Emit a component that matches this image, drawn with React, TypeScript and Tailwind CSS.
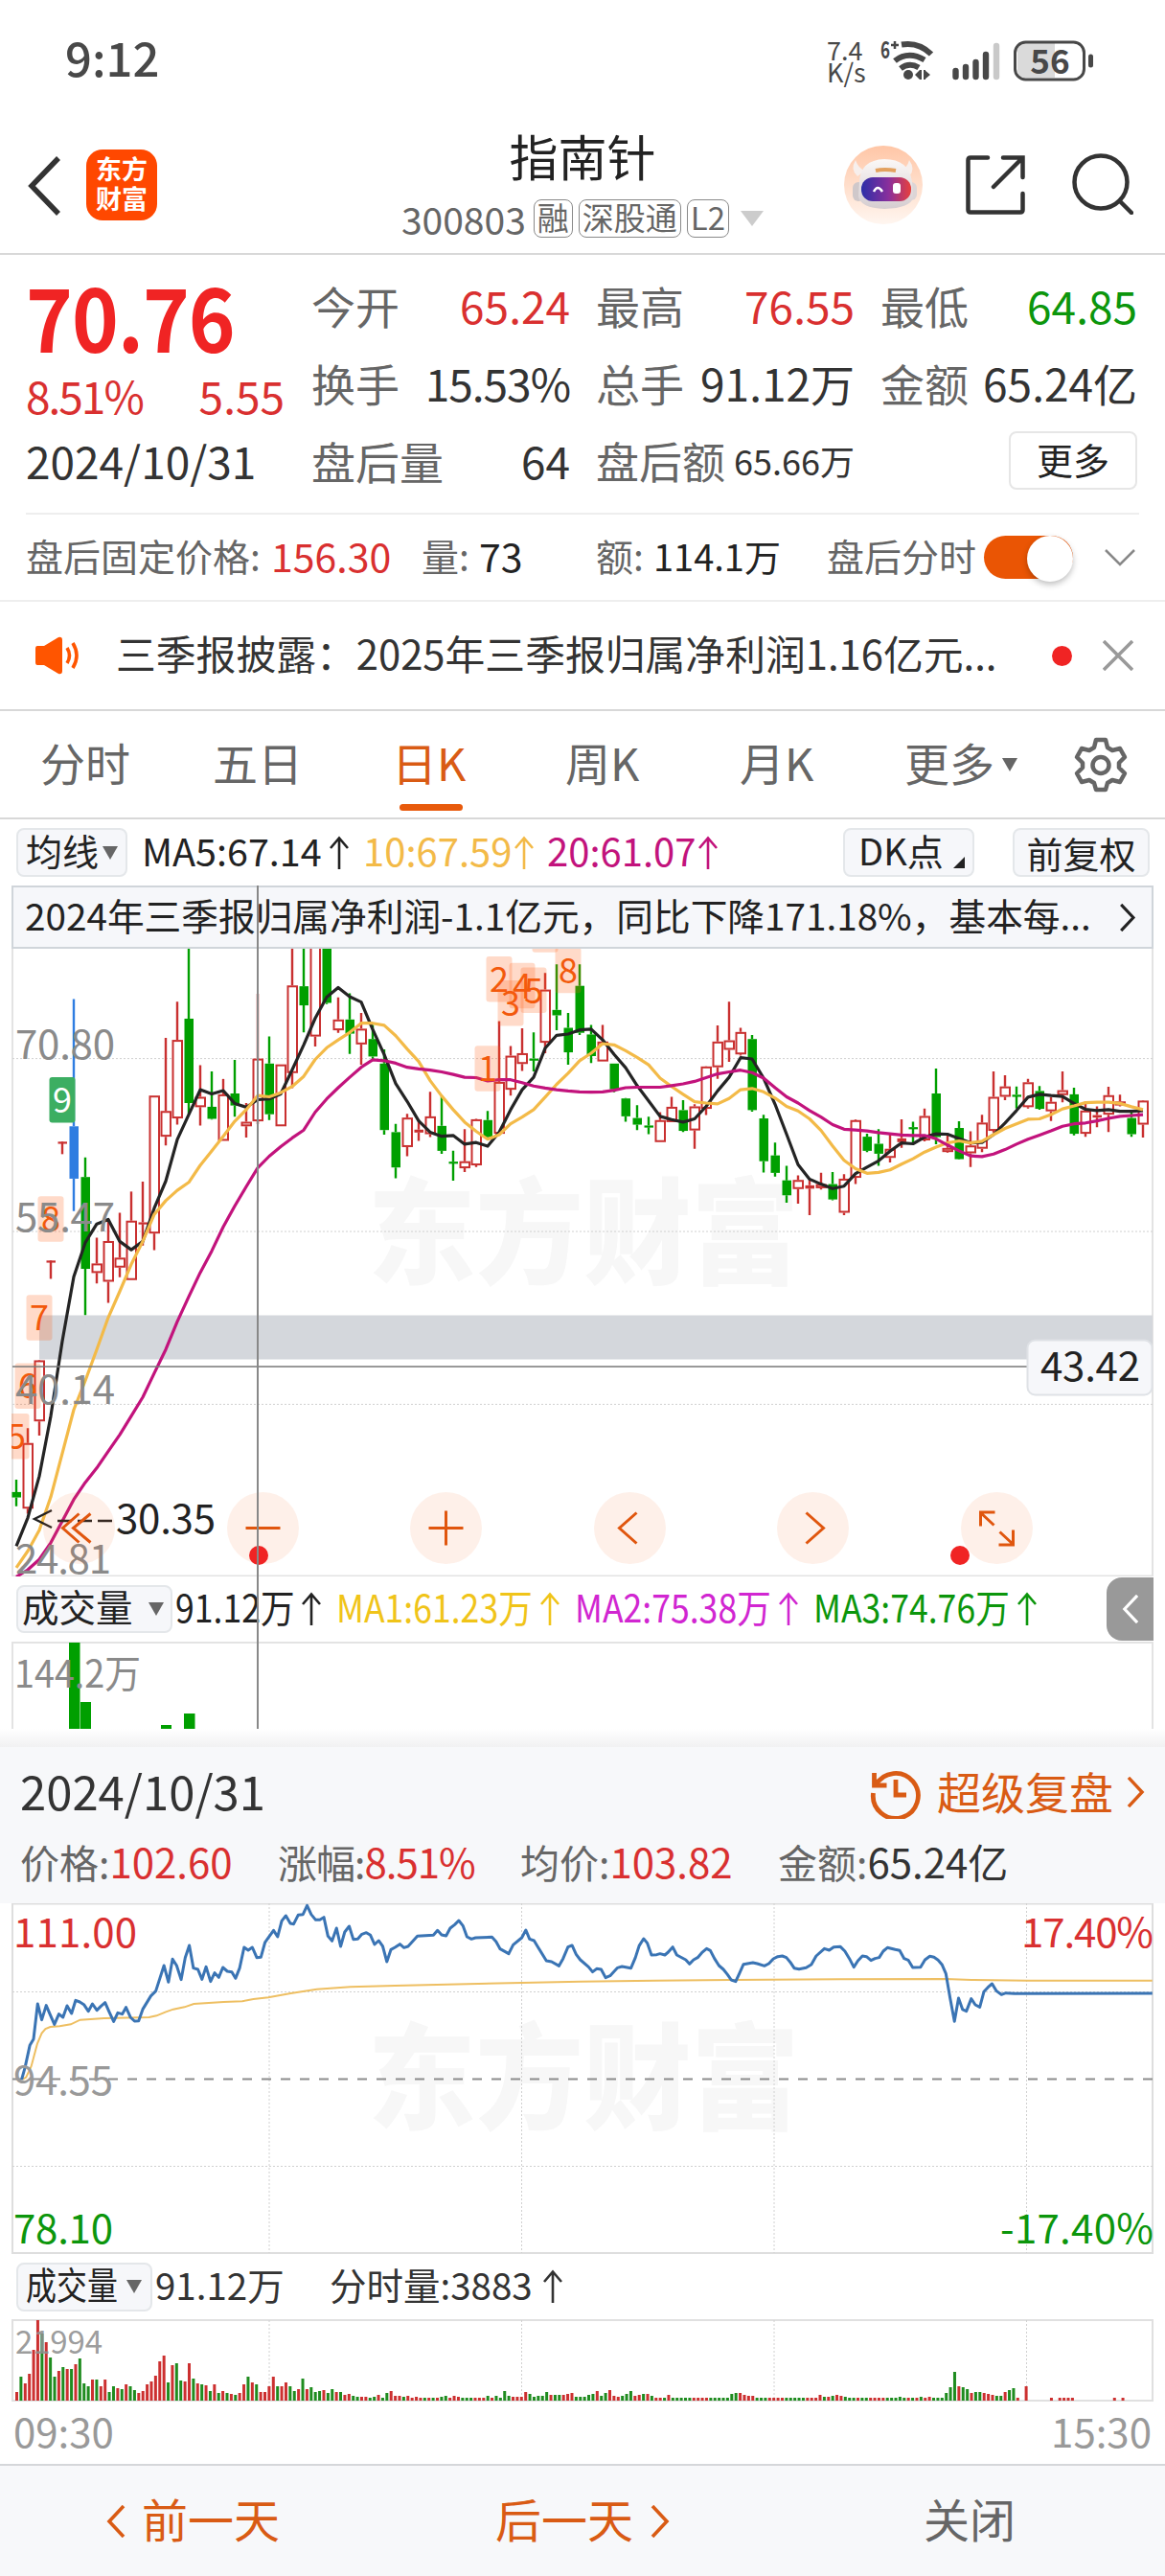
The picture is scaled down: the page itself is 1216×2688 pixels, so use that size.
import { Fragment, type ReactNode } from "react";

type Candle = [kind: "r" | "g" | "b", high: number, top: number, bottom: number, low: number];

// Chart units: one unit is UNIT px, 0 is 9px above the top edge of the plot.
const UNIT = 0.43367;
const STEP = 12;

const CANDLES: Candle[] = [
  ["g", 1298, 1328, 1341, 1362], ["r", 1174, 1210, 1368, 1380], ["r", 1010, 1011, 1158, 1192], ["r", 771, 771, 771, 815],
  ["r", 485, 485, 485, 515], ["b", 142, 448, 574, 652], ["g", 523, 570, 791, 902], ["r", 716, 778, 801, 826],
  ["r", 672, 724, 822, 873], ["r", 656, 764, 788, 811], ["r", 605, 675, 818, 818], ["r", 581, 679, 683, 735],
  ["r", 374, 374, 706, 746], ["r", 235, 411, 473, 494], ["r", 148, 240, 429, 444], ["g", 10, 189, 392, 418],
  ["r", 301, 377, 402, 446], ["g", 316, 401, 430, 432], ["r", 334, 371, 483, 483], ["g", 288, 369, 398, 425],
  ["r", 392, 437, 448, 475], ["r", 129, 285, 436, 443], ["g", 232, 297, 419, 433], ["r", 299, 299, 448, 448],
  ["r", 10, 109, 320, 356], ["g", 10, 111, 157, 222], ["r", 0, 0, 232, 256], ["g", 0, 0, 151, 154],
  ["r", 138, 191, 217, 223], ["g", 128, 191, 225, 274], ["r", 175, 213, 251, 300], ["g", 204, 238, 280, 290],
  ["g", 263, 297, 457, 468], ["g", 442, 462, 547, 573], ["r", 418, 427, 498, 520], ["r", 432, 456, 463, 483],
  ["r", 365, 424, 467, 474], ["g", 376, 447, 507, 514], ["g", 507, 533, 536, 579], ["r", 455, 532, 549, 558],
  ["r", 430, 431, 542, 546], ["g", 411, 433, 474, 480], ["r", 195, 341, 466, 466], ["r", 255, 278, 360, 374],
  ["r", 212, 272, 298, 315], ["g", 222, 285, 288, 316], ["r", 79, 119, 247, 272], ["g", 58, 168, 181, 217],
  ["g", 175, 211, 270, 300], ["g", 58, 110, 223, 228], ["g", 204, 227, 279, 296], ["r", 204, 244, 292, 292],
  ["g", 297, 297, 359, 366], ["g", 380, 381, 424, 437], ["g", 397, 428, 444, 457], ["g", 425, 446, 450, 467],
  ["r", 414, 433, 486, 486], ["r", 377, 401, 438, 438], ["g", 385, 409, 459, 462], ["r", 395, 400, 458, 502],
  ["r", 303, 304, 406, 421], ["r", 205, 244, 306, 334], ["r", 148, 241, 264, 293], ["r", 211, 221, 275, 278],
  ["g", 228, 238, 409, 413], ["g", 420, 429, 532, 559], ["g", 487, 518, 560, 569], ["g", 543, 578, 614, 632],
  ["r", 566, 577, 599, 634], ["r", 575, 590, 598, 662], ["r", 560, 587, 597, 600], ["g", 558, 587, 624, 626],
  ["r", 563, 574, 656, 662], ["r", 431, 433, 572, 587], ["g", 466, 473, 507, 510], ["g", 455, 490, 514, 543],
  ["r", 468, 502, 524, 535], ["r", 431, 477, 486, 500], ["g", 437, 450, 454, 488], ["r", 405, 423, 482, 484],
  ["g", 309, 369, 474, 491], ["r", 470, 500, 510, 512], ["g", 436, 452, 527, 528], ["r", 460, 494, 513, 546],
  ["r", 420, 439, 502, 510], ["r", 316, 377, 459, 463], ["r", 325, 352, 377, 385], ["g", 352, 372, 375, 405],
  ["r", 334, 342, 402, 405], ["g", 351, 363, 406, 408], ["r", 378, 389, 412, 435], ["r", 316, 361, 373, 390],
  ["g", 355, 371, 466, 470], ["r", 388, 410, 466, 473], ["r", 400, 421, 427, 450], ["r", 353, 373, 420, 462],
  ["r", 372, 388, 398, 400], ["g", 415, 428, 467, 473], ["r", 385, 386, 444, 475],
];

const MA5 = [
  1458, 1390, 1290, 1145, 965, 810, 728, 683, 672, 725, 745, 725, 645, 580, 480, 420, 360, 370, 362, 393, 402, 384, 382,
  370, 312, 252, 188, 137, 114, 136, 149, 215, 275, 345, 388, 435, 462, 472, 470, 491, 487, 496, 462, 408, 360, 330, 260,
  229, 226, 216, 214, 240, 275, 307, 350, 387, 424, 432, 438, 430, 400, 363, 330, 283, 286, 332, 395, 467, 540, 575, 587,
  598, 592, 562, 546, 531, 508, 488, 490, 474, 466, 467, 477, 488, 487, 468, 440, 410, 378, 371, 374, 376, 393, 407, 410,
  408, 412, 412, 410,
];
const MA10 = [
  1510, 1470, 1420, 1340, 1235, 1130, 1060, 985, 908, 845, 780, 725, 660, 627, 602, 583, 542, 507, 472, 436, 408, 374,
  377, 367, 352, 328, 287, 259, 240, 222, 200, 200, 205, 230, 262, 292, 338, 375, 408, 438, 460, 479, 468, 442, 426, 408,
  378, 347, 320, 290, 272, 249, 252, 266, 282, 300, 332, 352, 371, 389, 392, 394, 381, 360, 357, 365, 380, 400, 411, 430,
  458, 495, 530, 550, 561, 559, 553, 539, 526, 510, 498, 488, 483, 488, 484, 468, 453, 442, 431, 430, 420, 406, 399, 391,
  390, 390, 393, 401, 408,
];
const MA20 = [
  1532, 1515, 1490, 1450, 1398, 1346, 1305, 1270, 1230, 1190, 1145, 1100, 1042, 985, 918, 858, 800, 748, 690, 640, 593,
  548, 520, 497, 476, 457, 414, 382, 355, 330, 306, 288, 290, 296, 306, 310, 313, 317, 323, 330, 331, 339, 336, 336, 343,
  351, 356, 360, 363, 365, 366, 365, 361, 355, 354, 354, 354, 350, 346, 340, 331, 322, 317, 313, 319, 332, 355, 377, 392,
  410, 426, 444, 455, 457, 459, 463, 466, 469, 470, 470, 478, 493, 507, 519, 521, 515, 504, 491, 479, 469, 459, 448, 442,
  440, 435, 429, 424, 422, 420,
];

// [candle index, top in chart units, digit]
const SIGNALS: [number, number, string][] = [
  [0, 1139, "5"], [1, 1018, "6"], [2, 854, "7"], [3, 616, "8"], [41, 254, "1"], [42, 39, "2"], [43, 97, "3"],
  [44, 55, "4"], [45, 66, "5"], [46, -80, ""], [48, 18, "8"],
];

const PRICE_LINE =
  "58,597 67,560 80,490 90,470 101,360 112,410 124,365 135,395 146,424 158,392 169,402 180,366 192,390 203,349 214,354 225,362 237,383 248,360 260,380 271,367 282,356 293,385 305,415 316,388 328,392 338,371 350,402 361,414 372,413 383,377 405,335 418,320 440,240 452,292 463,220 474,240 486,284 497,215 508,177 519,248 531,252 542,283 553,244 565,290 576,263 587,277 598,246 610,258 622,260 632,280 643,248 655,183 666,192 677,183 689,215 700,214 711,168 722,150 734,130 745,150 756,100 767,84 779,108 788,110 800,82 813,80 824,52 835,80 847,97 858,97 869,89 880,148 891,163 903,123 914,180 925,135 937,117 948,158 960,157 971,142 983,137 994,145 1005,174 1016,162 1027,180 1038,228 1049,190 1060,183 1073,173 1084,184 1095,180 1120,148 1163,145 1174,130 1185,144 1197,147 1208,123 1220,112 1231,99 1242,115 1253,150 1265,157 1276,153 1320,151 1331,165 1342,188 1365,203 1377,175 1400,153 1411,129 1421,157 1433,162 1445,185 1466,225 1480,228 1500,241 1511,218 1524,182 1535,177 1546,205 1557,222 1579,244 1590,260 1601,250 1613,252 1625,278 1637,272 1657,247 1669,243 1693,248 1705,215 1715,178 1727,156 1737,170 1748,207 1762,206 1771,203 1784,207 1793,198 1805,182 1816,207 1840,222 1850,235 1861,222 1872,215 1883,200 1896,187 1906,193 1917,218 1929,240 1941,252 1952,268 1962,285 1974,290 1985,262 1995,236 2020,231 2032,234 2051,241 2063,234 2075,219 2087,212 2099,210 2110,215 2122,232 2131,248 2144,251 2163,247 2177,237 2190,210 2212,187 2225,192 2237,182 2255,181 2267,195 2279,218 2291,245 2302,225 2314,210 2325,212 2337,224 2348,218 2359,215 2370,195 2381,184 2402,190 2414,193 2426,218 2437,223 2449,246 2470,245 2482,222 2495,211 2506,214 2517,223 2528,238 2538,265 2549,340 2561,415 2572,342 2583,378 2593,383 2606,344 2617,363 2629,370 2640,322 2651,308 2662,297 2674,320 2687,331 2699,326 2722,328 3092,327";
const AVERAGE_LINE =
  "60,597 70,590 84,555 100,485 112,452 122,438 135,432 160,430 190,424 215,410 280,405 400,402 420,397 445,385 465,377 495,370 520,360 600,354 650,352 680,345 720,340 780,327 850,314 940,307 1060,303 1200,299 1400,294 1557,290 1757,287 1957,285 2257,283 2537,282 2607,285 2757,287 3092,287";

// One bar per minute, height in px.
const MINUTE_VOLUME =
  "r9 g25 r18 r28 r53 r84 g70 r61 g45 g25 r31 g35 r33 g33 r38 g44 g18 g15 r22 g22 r15 r22 g9 g15 r13 g12 r17 g15 g11 r8 r10 r17 r20 r26 r41 r47 g19 r37 g39 g21 r20 r39 g23 r18 g17 r16 g10 r17 g8 r10 g8 r7 g6 r8 r17 g25 r19 g17 r9 r9 r15 r25 g15 r15 r19 g15 g10 r12 g23 r12 g14 g9 g10 r11 g8 g12 r9 g9 r6 r7 g5 g4 r4 r4 g3 g4 r6 g3 g8 r10 r5 r5 g4 r5 r3 r4 r3 g3 r3 g3 r3 g4 g5 r3 r5 r4 g3 g3 g3 r3 r3 r3 g5 r3 g5 g3 g10 g5 r4 r4 r4 r9 g7 g4 g5 g5 g9 r6 g6 g6 r6 r7 r8 g4 g4 g4 g6 g7 r10 g5 g8 r11 r5 r4 g5 g7 g10 r5 r6 g7 r7 g5 r3 r3 g3 r6 g3 g3 g3 g3 g3 r3 r3 r3 r3 g3 g3 g3 g3 g3 g7 g8 r8 r6 r5 r5 g3 g3 g3 r3 r3 r3 r3 g3 g3 g3 g3 g3 r3 r3 r3 r6 g4 r4 g5 r6 r5 g4 g3 g3 r3 g3 g3 r3 r3 r3 r3 g3 g3 g3 g4 g3 r3 g3 r3 g4 r3 r4 g3 g3 g3 g8 g14 g30 r15 g14 g12 r8 g9 g9 r8 r7 r6 g5 g5 r9 g11 g13 r3 r0 r15 r0 r0 r0 r0 r0 r3 r0 r3 r3 r3 r3 r0 r0 r0 r0 r0 r0 r0 r0 r0 r3 r0 r3".split(" ");

const FILL = { r: "#c93030", g: "#009f00", b: "#2f7de1" };

const cx = (i: number) => 17 + i * STEP;
const cy = (v: number) => v * UNIT - 9;
const line = (values: number[]) => values.map((v, i) => `${cx(i)},${cy(v).toFixed(1)}`).join(" ");

function UpArrow({ className = "" }: { className?: string }) {
  return (
    <svg viewBox="0 0 22 36" className={`h-9 w-[22px] shrink-0 ${className}`} fill="none" stroke="currentColor" strokeWidth="2.6">
      <path d="M11 35V3M2 13l9-10.500 9 10.500" />
    </svg>
  );
}

function Caret({ className = "" }: { className?: string }) {
  return (
    <svg viewBox="0 0 16 14" className={`h-3.5 w-4 shrink-0 fill-[#666] ${className}`}>
      <path d="M0 0h16L8 14z" />
    </svg>
  );
}

function Chevron({ left, className = "" }: { left?: boolean; className?: string }) {
  return (
    <svg viewBox="0 0 20 34" className={`shrink-0 ${className}`} fill="none" stroke="currentColor" strokeWidth="3.6">
      <path d={left ? "M18 1 3 17l15 16" : "M2 1l15 16L2 33"} />
    </svg>
  );
}

function Squeeze({ children }: { children: ReactNode }) {
  return <span className="inline-block origin-left scale-x-[0.89] whitespace-nowrap">{children}</span>;
}

function Watermark({ y }: { y: number }) {
  return (
    <text x="384" y={y} fontSize="120" fontWeight="900" fill="#f7f7f7" textLength="450" lengthAdjust="spacingAndGlyphs">
      东方财富
    </text>
  );
}

function StatusBar() {
  return (
    <div className="flex h-[125px] items-center pl-[68px] text-[#484848]">
      <span className="-mt-2 text-[49px] font-medium">9:12</span>
      <div className="ml-auto flex w-[43px] flex-col text-[27px] leading-[23px] whitespace-nowrap">
        <span>7.4</span>
        <span>K/s</span>
      </div>
      <svg viewBox="0 0 240 50" className="mr-[58px] ml-3 h-[50px] w-[240px]" fill="none" stroke="#484848">
        <text x="1" y="23" fontSize="25" fontWeight="700" fill="#484848" stroke="none" textLength="10" lengthAdjust="spacingAndGlyphs">6</text>
        <path d="M12 9h8M16 5v8" strokeWidth="2.500" />
        <path d="M23 9q18-3 31 10M16 26q14-11 31-1M22 34q9-7 19-1" strokeWidth="6" transform="translate(0 -.5)" />
        <circle cx="30" cy="40" r="5" fill="#484848" stroke="none" />
        <path d="M37 40l5-5v10zM47 35v10l6-5z" fill="#484848" stroke="none" />
        <path d="M43 35v10M47 35v10" strokeWidth="2" />
        <g strokeWidth="6.4" strokeLinecap="round">
          <path d="M79.500 36v6M90 32v10M100.500 27v15M111 19v23" />
          <path d="M122 10v32" stroke="#c9c9c9" />
        </g>
        <path d="M150 7h33v36h-33q-6 0-6-9V16q0-9 6-9" fill="#dadada" stroke="none" />
        <rect x="141.500" y="6" width="72" height="39" rx="11" strokeWidth="3" />
        <path d="M220.500 21v9" strokeWidth="5" strokeLinecap="round" />
        <text x="178" y="38.500" fontSize="35" fontWeight="700" fill="#484848" stroke="none" textAnchor="middle">56</text>
      </svg>
    </div>
  );
}

function Robot() {
  return (
    <svg viewBox="0 0 82 82" className="size-[82px]">
      <defs>
        <linearGradient id="peach" x1="0" y1="0" x2="0" y2="1">
          <stop offset="0" stopColor="#ffc6a6" />
          <stop offset="1" stopColor="#fff6f0" />
        </linearGradient>
        <linearGradient id="visor">
          <stop offset="0" stopColor="#2c2fa8" />
          <stop offset=".55" stopColor="#8a2f9c" />
          <stop offset="1" stopColor="#e8403c" />
        </linearGradient>
        <linearGradient id="shell" x1="0" y1="0" x2="0" y2="1">
          <stop offset="0" stopColor="#fbf8f7" />
          <stop offset="1" stopColor="#d5cdd0" />
        </linearGradient>
      </defs>
      <circle cx="41" cy="41" r="41" fill="url(#peach)" />
      <path d="M12 15q-6 10 2 17l8-6q-7-2-10-11M68 15q7 10 0 17l-10-6q8-2 10-11" fill="#f7efec" />
      <rect x="9" y="38" width="12" height="20" rx="6" fill="#cfc8ca" />
      <rect x="64" y="38" width="12" height="19" rx="6" fill="#ddd5d6" />
      <path d="M16 38q1-23 26-24 26 0 29 24l1 16q-2 11-30 12-25-1-27-13z" fill="url(#shell)" />
      <rect x="18" y="33" width="52" height="25" rx="12" fill="url(#visor)" />
      <path d="M33 26q9-2 21 0" stroke="#e3a15f" strokeWidth="4" fill="none" />
      <path d="M31 48q4-8 9 0" stroke="#fff" strokeWidth="2.500" fill="none" />
      <rect x="51" y="39" width="8" height="11" rx="3" fill="#fff" />
    </svg>
  );
}

function Header() {
  return (
    <header className="grid h-[141px] grid-cols-[1fr_auto_1fr] border-b-2 border-[#d8d8d8] text-[#666]">
      <div className="flex items-start pt-[31px] pl-7">
        <svg viewBox="0 0 36 64" className="mt-1.5 h-16 w-9" fill="none" stroke="#333" strokeWidth="5.500">
          <path d="M33 3 5 32l28 29" />
        </svg>
        <div className="ml-[26px] flex size-[74px] flex-col items-center justify-center rounded-[17px] bg-[#ff4800] pb-1 text-[27px] leading-[31px] font-bold text-white">
          <span>东方</span>
          <span>财富</span>
        </div>
      </div>
      <div className="flex w-[380px] flex-col items-center">
        <h1 className="text-[51px] leading-[74px] text-[#222]">指南针</h1>
        <div className="mt-[7px] flex items-center gap-[6px] text-[39px] leading-[44px]">
          <span className="mr-0.5">300803</span>
          {["融", "深股通", "L2"].map((tag) => (
            <span key={tag} className="flex h-10 items-center rounded-lg border-[1.5px] border-[#8a8a8a] px-[3px] pb-1 text-[33px]">
              {tag}
            </span>
          ))}
          <svg viewBox="0 0 24 16" className="ml-1.5 h-4 w-6 fill-[#ccc]">
            <path d="M0 0h24L12 16z" />
          </svg>
        </div>
      </div>
      <div className="flex items-start justify-end pt-[27px] pr-[33px]">
        <Robot />
        <svg viewBox="0 0 62 62" className="mt-[10px] ml-[45px] size-[62px]" fill="none" stroke="#333" strokeWidth="4.500" strokeLinecap="round">
          <path d="M23 2.500H5q-2.500 0-2.500 2.500v52q0 2.500 2.500 2.500h52q2.500 0 2.500-2.500V40M39 2.500h20.500V23M59 3 29 33" />
        </svg>
        <svg viewBox="0 0 64 64" className="mt-2 ml-[49px] size-16" fill="none" stroke="#333" strokeWidth="4.500" strokeLinecap="round">
          <circle cx="30" cy="30" r="27.500" />
          <path d="m50 50 12 12" />
        </svg>
      </div>
    </header>
  );
}

function Stat({ label, value, tone = "text-[#333]" }: { label: string; value: string; tone?: string }) {
  return (
    <div className="flex justify-between whitespace-nowrap">
      <span className="text-[#666]">{label}</span>
      <span className={tone}>{value}</span>
    </div>
  );
}

function Quote() {
  return (
    <section className="flex h-[269px] pr-7 pl-[27px] text-[46px] leading-[81px]">
      <div className="w-[270px] pt-[12px] text-[#d93030]">
        <div className="h-[99px] origin-left scale-x-[0.9] text-[92px] leading-[100px] font-bold tracking-[-1px] text-[#f02424]">70.76</div>
        <div className="flex w-[270px] justify-between leading-[70px]">
          <span className="tracking-[-2px]">8.51%</span>
          <span>5.55</span>
        </div>
        <div className="leading-[66px] text-[#333]">2024/10/31</div>
      </div>
      <div className="mt-[12px] ml-7 grid grow grid-cols-[270px_270px_268px] content-start gap-x-[27px]">
        <Stat label="今开" value="65.24" tone="text-[#d93030]" />
        <Stat label="最高" value="76.55" tone="text-[#d93030]" />
        <Stat label="最低" value="64.85" tone="text-[#0c960c]" />
        <Stat label="换手" value="15.53%" tone="text-[#333] tracking-[-1px]" />
        <Stat label="总手" value="91.12万" />
        <Stat label="金额" value="65.24亿" />
        <Stat label="盘后量" value="64" />
        <div className="flex justify-between whitespace-nowrap">
          <span className="text-[45px] text-[#666]">盘后额</span>
          <span className="text-[36px] text-[#333]">65.66万</span>
        </div>
        <button className="mt-2.5 h-[61px] w-[134px] justify-self-end rounded-lg border-2 border-[#e6e6e6] pb-1 text-[38px] leading-[53px] text-[#222]">
          更多
        </button>
      </div>
    </section>
  );
}

function AfterHours() {
  return (
    <section className="border-b-2 border-[#eee]">
      <div className="mx-[27px] flex h-[91px] items-center border-t-2 border-[#eee] pb-1 text-[39px] whitespace-nowrap text-[#666]">
        <span className="w-[256px]">盘后固定价格:</span>
        <span className="w-[157px] text-[41px] text-[#d93030]">156.30</span>
        <span className="w-[60px]">量:</span>
        <span className="w-[122px] text-[41px] text-[#222]">73</span>
        <span className="w-[60px]">额:</span>
        <span className="w-[181px] text-[38px] text-[#222]">114.1万</span>
        <span>盘后分时</span>
        <span className="mt-1 ml-2 flex h-[45px] w-[93px] shrink-0 justify-end rounded-full bg-[#ea5504]">
          <span className="size-[48px] rounded-full bg-white shadow-[0_3px_6px_rgba(0,0,0,0.25)]" />
        </span>
        <svg viewBox="0 0 32 18" className="mt-1 mr-1 ml-auto h-[18px] w-8" fill="none" stroke="#888" strokeWidth="2.500">
          <path d="m1 1 15 15L31 1" />
        </svg>
      </div>
    </section>
  );
}

function Notice() {
  return (
    <section className="flex h-[114px] items-center border-b-2 border-[#d8d8d8] pr-[33px] pl-9 text-[42px] text-[#333]">
      <svg viewBox="0 0 48 40" className="h-10 w-12" fill="none" stroke="#ff5500" strokeWidth="3.600">
        <path d="M3 10h7L25 1q4-1 4 3v32q0 4-4 3L10 30H3q-2 0-2-3V13q0-3 2-3" fill="#ff5500" stroke="none" />
        <path d="M34 12q5 8 0 16M40 7q8 13 0 26" />
      </svg>
      <span className="-mt-1.5 ml-[37px] text-[41.800px] whitespace-nowrap">三季报披露：2025年三季报归属净利润1.16亿元...</span>
      <span className="ml-auto size-[21px] rounded-full bg-[#f02424]" />
      <svg viewBox="0 0 32 32" className="ml-8 size-8" fill="none" stroke="#999" strokeWidth="3.500">
        <path d="m1 1 30 30M31 1 1 31" />
      </svg>
    </section>
  );
}

function Tabs() {
  const tabs = [
    ["分时", "w-[180px]"], ["五日", "w-[187px]"], ["日K", "w-[181px]"], ["周K", "w-[182px]"], ["月K", "w-[172px]"],
  ];
  return (
    <nav className="flex h-[113px] items-center border-b-2 border-[#d8d8d8] pl-[42px] text-[47px] text-[#666]">
      {tabs.map(([name, width]) => (
        <div key={name} className={`${width} relative ${name === "日K" ? "text-[#d95b14]" : ""}`}>
          <span className="relative -top-0.5">{name}</span>
          {name === "日K" && <span className="absolute -bottom-[13px] left-2 h-[7px] w-[66px] rounded bg-[#e85a0c]" />}
        </div>
      ))}
      <span className="-mt-1">更多</span>
      <Caret className="ml-2" />
      <svg viewBox="0 0 56 58" className="ml-[59px] h-[58px] w-14" fill="none" stroke="#666" strokeWidth="4.500" strokeLinejoin="round">
        <path d="M23 3h10l2 8 5 3 8-2 5 9-6 6v5l6 6-5 9-8-2-5 3-2 7H23l-2-7-5-3-8 2-5-9 6-6v-5l-6-6 5-9 8 2 5-3z" />
        <circle cx="28" cy="29.500" r="8.500" />
      </svg>
    </nav>
  );
}

function MaRow() {
  return (
    <div className="flex h-[69px] items-center pr-4 pl-[17px] text-[40px] whitespace-nowrap text-[#222]">
      <button className="flex h-[51px] w-[116px] items-center rounded-lg border-2 border-[#e4e7ea] bg-[#f6f7fa] pl-2 text-[38px]">
        <span className="-mt-1.5">均线</span>
        <Caret className="ml-1" />
      </button>
      <span className="-mt-1.5 ml-[15px] w-[195px] text-[39.500px]">MA5:67.14</span>
      <UpArrow />
      <span className="-mt-1.5 ml-[14px] w-[157px]  text-[#f3ba48]">10:67.59</span>
      <UpArrow className="text-[#f3ba48]" />
      <span className="-mt-1.5 ml-[13px] w-[157px] text-[#c2137c]">20:61.07</span>
      <UpArrow className="text-[#c2137c]" />
      <button className="ml-auto flex h-[51px] w-[137px] items-center rounded-lg border-2 border-[#e4e7ea] bg-[#f6f7fa] pl-3.5">
        <span className="-mt-1.5 text-[38px]">DK点</span>
        <svg viewBox="0 0 12 12" className="mt-5 ml-2.5 size-3 fill-[#222]">
          <path d="M12 0v12H0z" />
        </svg>
      </button>
      <button className="ml-10 h-[51px] w-[143px] rounded-lg border-2 border-[#e4e7ea] bg-[#f6f7fa] text-[38px] leading-[38px]">前复权</button>
    </div>
  );
}

function RoundButton({ x, d }: { x: number; d: string }) {
  return (
    <g transform={`translate(${x} 604.500)`}>
      <circle r="37.500" fill="rgba(250,110,40,0.1)" />
      <path d={d} fill="none" stroke="#e0560e" strokeWidth="3" />
    </g>
  );
}

function KChart() {
  return (
    <svg viewBox="0 0 1216 655" className="block h-[655px] w-full">
      <defs>
        <clipPath id="plot">
          <rect x="12" y="0" width="1191" height="655" />
        </clipPath>
      </defs>
      <Watermark y={341} />
      <path d="M13 0v654.500h1190V0" fill="none" stroke="#e3e3e3" strokeWidth="2" />
      <path d="M13 114.600h1190M13 295h1190M13 475.400h1190" stroke="#d0d0d0" strokeDasharray="2 2" />
      <rect x="41" y="382.500" width="1162" height="46" fill="#d4d7dc" />

      <g clipPath="url(#plot)">
        {CANDLES.map(([kind, high, top, bottom, low], i) => {
          const x = cx(i);
          const color = FILL[kind];
          const hollow = kind === "r" && bottom - top > 9;
          const h = Math.max((bottom - top) * UNIT, 2.2);
          return (
            <Fragment key={i}>
              <path d={`M${x} ${cy(high)}V${cy(top)}M${x} ${cy(bottom)}V${cy(low)}`} stroke={color} strokeWidth="2.400" />
              {hollow ? (
                <rect x={x - 4.5} y={cy(top) + 1} width="9.500" height={h - 2} fill="#fff" stroke={color} strokeWidth="2" />
              ) : (
                <rect x={x - 4.5} y={cy(top)} width="9.500" height={h} fill={color} />
              )}
            </Fragment>
          );
        })}
        <g fill="none" strokeWidth="3.200" strokeLinejoin="round">
          <polyline points={line(MA5)} stroke="#242424" />
          <polyline points={line(MA10)} stroke="#f3ba48" />
          <polyline points={line(MA20)} stroke="#c2137c" />
        </g>
        {SIGNALS.map(([i, top, digit]) => (
          <g key={i} transform={`translate(${cx(i)} ${cy(top)})`}>
            <rect x="-13.500" y="0" width="27" height="47.500" rx="3" fill="rgba(255,95,20,0.23)" />
            {digit && <text y="37" fontSize="36" fill="#f2590c" textAnchor="middle">{digit}</text>}
          </g>
        ))}
        <g transform={`translate(${cx(4)} ${cy(330)})`}>
          <rect x="-13.500" width="27" height="47.500" rx="3" fill="#3cae62" />
          <text y="37" fontSize="36" fill="#fff" textAnchor="middle">9</text>
        </g>
      </g>

      <g fontSize="42" fill="#8a8a8a">
        <text x="16" y="114.500" textLength="104">70.80</text>
        <text x="16" y="295" textLength="104">55.47</text>
        <text x="16" y="475" textLength="104">40.14</text>
        <text x="16" y="652" textLength="100">24.81</text>
      </g>
      <path d="M54 586 36 595l18 9M60 597h15M81 597h15M102 597h15" fill="none" stroke="#222" strokeWidth="2.400" />
      <text x="121" y="610" fontSize="42" fill="#222" textLength="104">30.35</text>
      <path d="M13 436h1190" stroke="#777" strokeWidth="1.500" />

      <RoundButton x={82.5} d="M12-15-6 0l18 15M0-15-17 0 0 15" />
      <RoundButton x={274.5} d="M-18 0h36" />
      <RoundButton x={465.5} d="M-18 0h36M0-18v36" />
      <RoundButton x={657.5} d="M7-16-11 0 7 16" />
      <RoundButton x={848.5} d="M-7-16 11 0-7 16" />
      <RoundButton x={1040.5} d="M-3-3-17-16M-17-2v-14.500h15M3 4 17 17M17 2v15.500H2" />
      <circle cx="270" cy="633" r="10" fill="#f02424" />
      <circle cx="1002" cy="633" r="10" fill="#f02424" />
      <rect x="1072.500" y="408.500" width="130" height="57" rx="8" fill="#f6f7fa" stroke="#dfe2e6" strokeWidth="2" />
      <text x="1086" y="450.500" fontSize="42" fill="#222" textLength="104">43.42</text>
    </svg>
  );
}

function VolumeRow() {
  return (
    <div className="flex h-[68px] items-center pl-[17px] text-[40px] whitespace-nowrap text-[#222]">
      <button className="flex h-[50px] w-[163px] items-center rounded-lg border-2 border-[#e4e7ea] bg-[#f6f7fa] pl-1 text-[38.500px]">
        <span className="-mt-1.5">成交量</span>
        <Caret className="ml-4" />
      </button>
      <span className="-mt-1.5 ml-[3px] w-[131px]"><Squeeze>91.12万</Squeeze></span>
      <UpArrow />
      <span className="-mt-1.5 ml-[15px] w-[212px] text-[#f0c419]"><Squeeze>MA1:61.23万</Squeeze></span>
      <UpArrow className="text-[#f0c419]" />
      <span className="-mt-1.5 ml-[15px] w-[212px] text-[#d126d1]"><Squeeze>MA2:75.38万</Squeeze></span>
      <UpArrow className="text-[#d126d1]" />
      <span className="-mt-1.5 ml-[15px] w-[212px] text-[#0c960c]"><Squeeze>MA3:74.76万</Squeeze></span>
      <UpArrow className="text-[#0c960c]" />
      <span className="mr-3 ml-auto flex h-[66px] w-[49px] items-center justify-center rounded-l-2xl bg-[#999] text-white">
        <Chevron left className="h-[30px] w-[18px]" />
      </span>
    </div>
  );
}

function KPanel() {
  return (
    <section className="relative">
      <div className="mx-3 flex h-[66px] items-center justify-between border-2 border-[#d0d5da] bg-[#f6f7fa] pr-4 pl-3 text-[38.700px] whitespace-nowrap text-[#222]">
        <span className="-mt-1.5">2024年三季报归属净利润-1.1亿元，同比下降171.18%，基本每...</span>
        <Chevron className="h-[29px] w-[18px]" />
      </div>
      <KChart />
      <VolumeRow />
      <svg viewBox="0 0 1216 91" className="block h-[91px] w-full">
        <path d="M13 91V1h1190v90" fill="none" stroke="#e3e3e3" strokeWidth="2" />
        <path d="M72 1h11.500v90H72zM84 63h11v28H84zM168 87h11v4h-11zM192 75h11.500v16H192z" fill="#009f00" />
        <text x="15" y="48" fontSize="40" fill="#8a8a8a" textLength="132" lengthAdjust="spacingAndGlyphs">144.2万</text>
      </svg>
      <div className="absolute inset-y-0 left-[268px] w-[1.500px] bg-[#888]" />
    </section>
  );
}

function DayPanel() {
  const items = [
    ["价格:", "102.60", "w-[269px]", "text-[#d93030]"],
    ["涨幅:", "8.51%", "w-[253px] tracking-[-1px]", "text-[#d93030]"],
    ["均价:", "103.82", "w-[269px]", "text-[#d93030]"],
    ["金额:", "65.24亿", "w-[260px]", "text-[#333]"],
  ];
  return (
    <section className="h-[163px] bg-[#f7f8fa] px-[21px] whitespace-nowrap">
      <div className="flex h-[90px] items-center text-[#d95b14]">
        <span className="text-[49px] text-[#333]">2024/10/31</span>
        <svg viewBox="0 0 54 54" className="mt-1.5 mr-4 ml-auto size-[54px]" fill="none" stroke="currentColor" strokeWidth="4.800">
          <path d="M4.500 6v13h13M6 19A23.500 23.500 0 1 1 3.500 27M27 13v16h11" />
        </svg>
        <span className="text-[46px]">超级复盘</span>
        <Chevron className="mt-1 ml-3.5 h-8 w-[19px]" />
      </div>
      <div className="flex h-[58px] items-center text-[42px]">
        {items.map(([label, value, width, tone]) => (
          <span key={label} className={`${width} ${tone}`}>
            <span className="text-[41px] text-[#666]">{label}</span>
            {value}
          </span>
        ))}
      </div>
    </section>
  );
}

function MinuteChart() {
  return (
    <svg viewBox="0 0 1216 366" className="block h-[366px] w-full">
      <Watermark y={227} />
      <path d="M13 .500h1190V365H13z" fill="none" stroke="#dedede" strokeWidth="2" />
      <path d="M281 0v365M544.500 0v365M808 0v365M1071.500 0v365M13 92.500h1190M13 274.500h1190" stroke="#d0d0d0" strokeDasharray="2 2" />
      <path d="M13 183.500h1190" stroke="#8c8c8c" strokeWidth="2" strokeDasharray="10 10" />
      <g transform="translate(0 -15) scale(.3890 .3333)" fill="none">
        <polyline points={AVERAGE_LINE} stroke="#eebf62" strokeWidth="2" vectorEffect="non-scaling-stroke" />
        <polyline points={PRICE_LINE} stroke="#3a74b4" strokeWidth="3" strokeLinejoin="round" vectorEffect="non-scaling-stroke" />
      </g>
      <g fontSize="42">
        <text x="14" y="46" fill="#d93030" textLength="129">111.00</text>
        <text x="14" y="200" fill="#999" textLength="104">94.55</text>
        <text x="14" y="355" fill="#0c960c" textLength="104">78.10</text>
        <text x="1204" y="46" fill="#d93030" textAnchor="end" textLength="138">17.40%</text>
        <text x="1204" y="355" fill="#0c960c" textAnchor="end" textLength="160">-17.40%</text>
      </g>
    </svg>
  );
}

function MinuteVolume() {
  return (
    <section>
      <div className="flex h-[68px] items-center pl-[17px] text-[38.500px] whitespace-nowrap text-[#333]">
        <button className="flex h-[51px] w-[142px] items-center rounded-lg border-2 border-[#e4e7ea] bg-[#f6f7fa] pl-2 text-[#222]">
          <span className="-mt-1.5 w-[107px]">
            <span className="inline-block origin-left scale-x-[0.83]">成交量</span>
          </span>
          <Caret className="-ml-0.5" />
        </button>
        <span className="-mt-1 ml-[3px] w-[182px]">91.12万</span>
        <span className="-mt-1 w-[222px]">分时量:3883</span>
        <UpArrow />
      </div>
      <svg viewBox="0 0 1216 86" className="block h-[86px] w-full">
        <path d="M13 1h1190v84H13z" fill="none" stroke="#e0e0e0" strokeWidth="2" />
        <path d="M281 1v84M544.500 1v84M808 1v84M1071.500 1v84" stroke="#d0d0d0" strokeDasharray="2 2" />
        {MINUTE_VOLUME.map((bar, i) => {
          const h = Number(bar.slice(1));
          return <rect key={i} x={16 + i * 4.39} y={85 - h} width="3" height={h} fill={bar[0] === "r" ? "#cc3030" : "#1f8c1f"} />;
        })}
        <text x="16" y="35.500" fontSize="33" fill="#8f8f8f" fillOpacity=".9" textLength="91">21994</text>
      </svg>
      <div className="flex h-[65px] items-center justify-between px-[14px] pb-1.5 text-[42px] text-[#999]">
        <span>09:30</span>
        <span>15:30</span>
      </div>
    </section>
  );
}

function Footer() {
  return (
    <footer className="flex h-[118px] items-center border-t-2 border-[#d5d7da] bg-[#f7f8fa] text-[48px] text-[#d95b14]">
      <Chevron left className="ml-[111px] h-[34px] w-5" />
      <span className="-mt-2 ml-[17px]">前一天</span>
      <span className="-mt-2 ml-[225px]">后一天</span>
      <Chevron className="ml-[18px] h-[34px] w-5" />
      <span className="-mt-2 ml-[265px] text-[#666]">关闭</span>
    </footer>
  );
}

export default function App() {
  return (
    <div className="h-[2688px] w-[1216px] overflow-hidden bg-white font-['Noto_Sans_CJK_SC','Noto_Sans',sans-serif]">
      <StatusBar />
      <Header />
      <Quote />
      <AfterHours />
      <Notice />
      <Tabs />
      <MaRow />
      <KPanel />
      <div className="h-[19px] bg-gradient-to-b from-white to-[#f1f1f2]" />
      <DayPanel />
      <MinuteChart />
      <MinuteVolume />
      <Footer />
    </div>
  );
}
